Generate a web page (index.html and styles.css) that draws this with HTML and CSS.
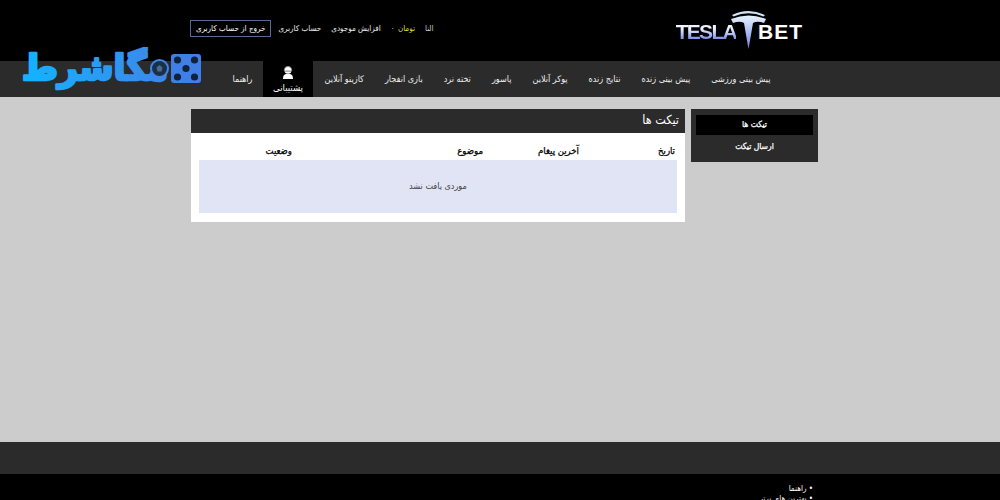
FILE: index.html
```html
<!DOCTYPE html>
<html lang="fa" dir="rtl">
<head>
    <meta charset="UTF-8">
    <title>تیکت ها</title>
    <link rel="stylesheet" href="styles.css">
</head>
<body>
    <header class="top">
        <div class="wrap top-row">
            <div class="brand">
                <span class="brand-a">TESLA</span>
                <svg class="brand-t" width="37" height="40" viewBox="0 0 37 40">
                    <defs>
                        <linearGradient id="tg" x1="0" y1="0" x2="0" y2="1">
                            <stop offset="0" stop-color="#e8f4ff"/>
                            <stop offset="1" stop-color="#6f7fe8"/>
                        </linearGradient>
                    </defs>
                    <path d="M2 6 Q18.5 -2 35 6 L33.500 7.500 Q18.500 1 3.500 7.500 Z" fill="#cfe6f5"/>
                    <path d="M1 10 Q18.500 3 36 10 L34 14 Q27 11.500 23 14 Q21 26 18.500 40 Q16 26 14 14 Q10 11.500 3 14 Z" fill="url(#tg)"/>
                </svg>
                <span class="brand-b">BET</span>
            </div>
            <nav class="user-links">
                <span class="user-name">النا</span>
                <span class="balance">تومان <span class="balance-sep">٠</span></span>
                <a class="user-link">افزایش موجودی</a>
                <a class="user-link">حساب کاربری</a>
                <a class="logout">خروج از حساب کاربری</a>
            </nav>
        </div>
    </header>

    <div class="menu">
        <div class="wrap menu-row">
            <a class="menu-item">پیش بینی ورزشی</a>
            <a class="menu-item">پیش بینی زنده</a>
            <a class="menu-item">نتایج زنده</a>
            <a class="menu-item">پوکر آنلاین</a>
            <a class="menu-item">پاسور</a>
            <a class="menu-item">تخته نرد</a>
            <a class="menu-item">بازی انفجار</a>
            <a class="menu-item">کازینو آنلاین</a>
            <a class="menu-item active">
                <svg width="12" height="13" viewBox="0 0 13 14">
                    <circle cx="6.500" cy="4.500" r="3.800" fill="#fff"/>
                    <path d="M1 14 Q1 9 4.500 8.500 L8.500 8.500 Q12 9 12 14 Z" fill="#fff"/>
                    <path d="M2.500 5 Q2.500 .5 6.500 .5 Q10.500 .5 10.500 5" fill="none" stroke="#999" stroke-width="1"/>
                    <path d="M3 5.500 H10" stroke="#777" stroke-width="1"/>
                </svg>
                پشتیبانی
            </a>
            <a class="menu-item">راهنما</a>
        </div>
    </div>

    <svg class="mega-logo" width="180" height="46" viewBox="0 0 180 46">
        <defs>
            <linearGradient id="mg" gradientUnits="userSpaceOnUse" x1="0" y1="0" x2="150" y2="0">
                <stop offset="0" stop-color="#12b4ff"/>
                <stop offset="1" stop-color="#3f84e8"/>
            </linearGradient>
        </defs>
        <text class="mega-text" x="146" y="33" direction="rtl" textLength="146" lengthAdjust="spacingAndGlyphs" fill="url(#mg)" stroke="url(#mg)">مگاشرط</text>
        <circle cx="137.500" cy="21.500" r="9.500" fill="#3f84e8"/>
        <circle cx="137.500" cy="21.500" r="7.500" fill="#1b3047"/>
        <path d="M137.500 18 L140.500 20.500 L139.500 24.500 H135.500 L134.500 20.500 Z" fill="#4b6c8c"/>
        <rect x="149" y="7" width="30" height="29" rx="3" fill="#3f7fe6"/>
        <circle cx="155.500" cy="13" r="3.600" fill="#10233a"/>
        <circle cx="172.500" cy="13" r="3.600" fill="#10233a"/>
        <circle cx="164" cy="21.500" r="3.600" fill="#10233a"/>
        <circle cx="155.500" cy="30" r="3.600" fill="#10233a"/>
        <circle cx="172.500" cy="30" r="3.600" fill="#10233a"/>
    </svg>

    <main class="page">
        <div class="wrap content">
            <aside class="side">
                <a class="side-item current">تیکت ها</a>
                <a class="side-item">ارسال تیکت</a>
            </aside>
            <section class="panel">
                <h2 class="panel-title">تیکت ها</h2>
                <div class="panel-body">
                    <div class="table-head">
                        <span>تاریخ</span>
                        <span>آخرین پیغام</span>
                        <span>موضوع</span>
                        <span>وضعیت</span>
                    </div>
                    <div class="empty">موردی یافت نشد</div>
                </div>
            </section>
        </div>
    </main>

    <div class="foot-bar"></div>
    <footer class="foot">
        <ul class="wrap foot-list">
            <li>راهنما</li>
            <li>بهترین های برتر</li>
        </ul>
    </footer>
</body>
</html>
```

FILE: styles.css
```css
html, body {
    margin: 0;
    height: 500px;
    overflow: hidden;
}
body {
    position: relative;
    background-color: #000;
    font-family: "DejaVu Sans Condensed", "DejaVu Sans", sans-serif;
    font-size: 9px;
    color: #fff;
}
a {
    color: inherit;
    text-decoration: none;
}
.wrap {
    width: 628px;
    margin-right: 182px;
    box-sizing: border-box;
}
.top {
    height: 61px;
}
.top-row {
    display: flex;
    justify-content: space-between;
    height: 61px;
}
.brand {
    display: flex;
    direction: ltr;
    align-items: flex-start;
    margin-right: 15px;
    padding-top: 9px;
    font-family: "Liberation Sans", sans-serif;
    font-weight: bold;
    font-size: 21px;
    line-height: 24px;
}
.brand-a {
    margin-top: 11px;
    background: linear-gradient(#eef3ff 35%, #7080e8 85%);
    -webkit-background-clip: text;
    background-clip: text;
    color: transparent;
    letter-spacing: -1.700px;
}
.brand-b {
    margin-top: 11px;
    letter-spacing: 1px;
}
.brand-t {
    margin: 0 -9px 0 -6px;
}
.user-links {
    display: flex;
    align-items: center;
    gap: 10px;
    height: 57px;
    font-size: 8px;
}
.user-name {
    color: #ccc;
}
.balance {
    color: #dddd33;
    word-spacing: 1px;
}
.balance-sep {
    color: #8fd0a0;
}
.user-link {
    color: #eee;
}
.logout {
    border: 1px solid #5a6a90;
    padding: 3px 5px;
    line-height: 9px;
    margin-right: -3px;
}
.menu {
    height: 36px;
    background-color: #2b2b2b;
}
.menu-row {
    display: flex;
    height: 36px;
    padding-right: 37px;
}
.menu-item {
    display: flex;
    align-items: center;
    padding: 0 10.500px;
    color: #eee;
    white-space: nowrap;
}
.menu-item.active {
    flex-direction: column;
    justify-content: center;
    gap: 3px;
    width: 50px;
    box-sizing: border-box;
    margin-right: 1px;
    padding: 0;
    background-color: #000;
    color: #fff;
    font-size: 9.500px;
}
.mega-logo {
    position: absolute;
    left: 22px;
    top: 47px;
}
.mega-text {
    font-size: 36px;
    font-weight: bold;
    stroke-width: 2.500px;
    stroke-linejoin: round;
}
.page {
    height: 345px;
    background-color: #ccc;
}
.content {
    display: flex;
    gap: 6px;
    padding-top: 12px;
}
.side {
    width: 127px;
    height: 53px;
    box-sizing: border-box;
    padding: 6px 5px;
    background-color: #2b2b2b;
}
.side-item {
    display: block;
    height: 20px;
    line-height: 18px;
    margin-bottom: 2px;
    text-align: center;
    font-size: 8.500px;
    -webkit-text-stroke: 0.250px #fff;
}
.side-item.current {
    background-color: #000;
}
.panel {
    width: 494px;
}
.panel-title {
    margin: 0;
    height: 24px;
    line-height: 22px;
    padding: 0 6px;
    background-color: #2b2b2b;
    font-size: 12.500px;
    font-weight: normal;
}
.panel-body {
    height: 89px;
    box-sizing: border-box;
    padding: 0 8px;
    background-color: #fff;
    color: #000;
}
.table-head {
    display: grid;
    grid-template-columns: 96px 96px 191px 1fr;
    height: 27px;
    padding-right: 2px;
    line-height: 35px;
    font-size: 9.500px;
    -webkit-text-stroke: 0.250px #000;
}
.empty {
    height: 53px;
    line-height: 53px;
    text-align: center;
    background-color: #e0e4f4;
    color: #444;
}
.foot-bar {
    height: 32px;
    background-color: #2b2b2b;
}
.foot {
    height: 26px;
    overflow: hidden;
}
.foot-list {
    list-style: none;
    margin-top: 0;
    margin-bottom: 0;
    padding: 10px 5px 0 0;
    line-height: 10px;
    font-size: 8px;
}
.foot-list li::before {
    content: "• ";
}
```
